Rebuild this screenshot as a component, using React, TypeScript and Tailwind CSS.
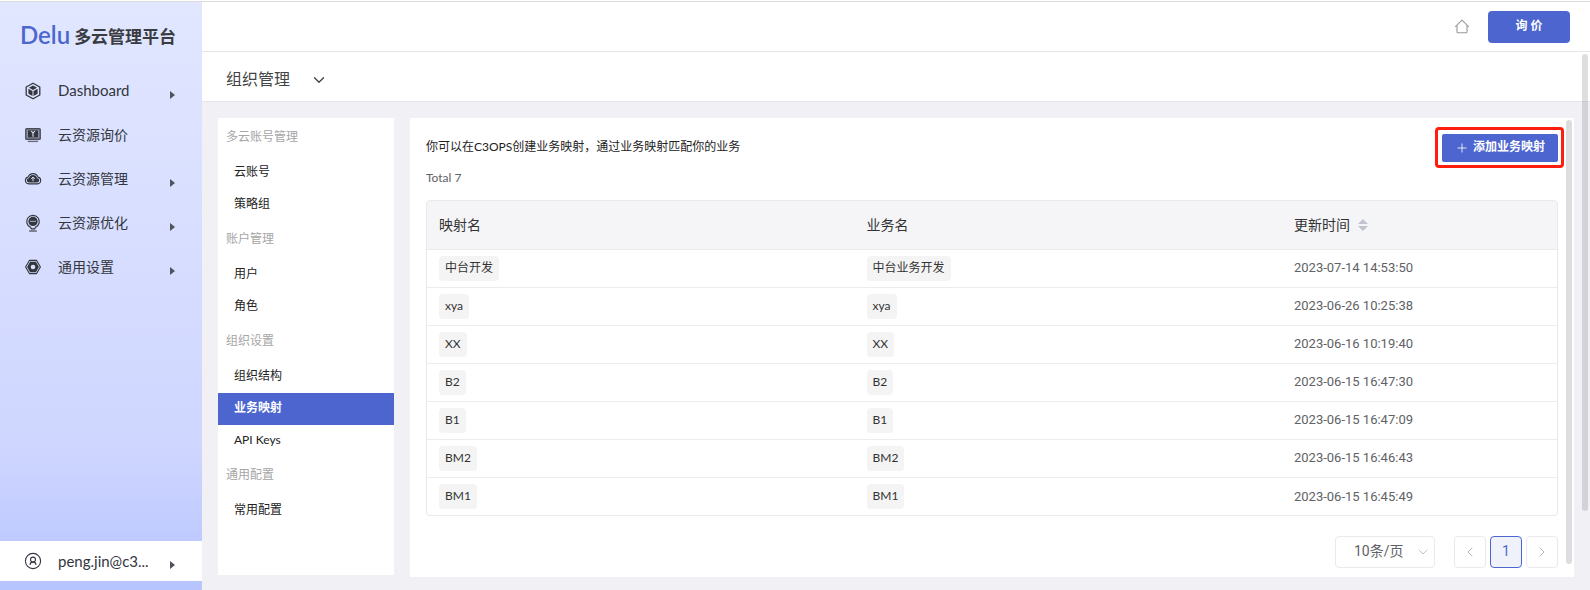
import React, { useState } from "react";
import { clsx } from "clsx";
import { ChevronDown, ChevronLeft, ChevronRight, Plus } from "lucide-react";

type NavItem = {
  label: string;
  icon: React.ReactNode;
  expandable: boolean;
};

type MenuGroup = {
  title: string;
  items: string[];
};

type Mapping = {
  name: string;
  business: string;
  updatedAt: string;
};

const CubeIcon = () => (
  <svg width="18" height="18" viewBox="0 0 18 18" fill="none" aria-hidden="true">
    <path d="M9 1.2 15.8 5v8L9 16.8 2.2 13V5L9 1.2Z" stroke="#33363d" strokeWidth="1.3" strokeLinejoin="round" />
    <path d="M9 3.6 13 5.8 9 8 5 5.8 9 3.6Z" fill="#33363d" />
    <path d="M4.4 6.8 8.5 9v5L4.4 11.8v-5ZM13.6 6.8 9.5 9v5l4.1-2.2v-5Z" fill="#33363d" />
  </svg>
);

const MonitorIcon = () => (
  <svg width="18" height="18" viewBox="0 0 18 18" fill="none" aria-hidden="true">
    <rect x="1.8" y="2.8" width="14.4" height="10.4" rx="0.8" fill="#8d92a6" stroke="#4a4d57" strokeWidth="1.4" />
    <rect x="4" y="4.4" width="10" height="7" fill="#33363d" />
    <path d="M7.2 5 9 7.2 10.8 5M9 7.2v3.6" stroke="#dfe5ff" strokeWidth="1.1" />
    <path d="M3.8 15.4h10.4" stroke="#6a6d79" strokeWidth="1.4" />
  </svg>
);

const CloudIcon = () => (
  <svg width="20" height="18" viewBox="0 0 20 18" fill="none" aria-hidden="true">
    <path
      d="M5.2 14.4h9.8a3.8 3.8 0 0 0 .6-7.5 5.9 5.9 0 0 0-11.1 0 3.8 3.8 0 0 0 .7 7.5Z"
      stroke="#33363d"
      strokeWidth="1.2"
    />
    <path d="M5.4 12.8h9.2a2.3 2.3 0 0 0 0-4.6 4.7 4.7 0 0 0-9.2 0 2.3 2.3 0 0 0 0 4.6Z" fill="#33363d" />
    <path d="M10 11.4V7M8 8.8l2-2 2 2" stroke="#dbe1ff" strokeWidth="1.1" />
  </svg>
);

const BulbIcon = () => (
  <svg width="18" height="18" viewBox="0 0 18 18" fill="none" aria-hidden="true">
    <path d="M6.6 13.4a6.3 6.3 0 1 1 4.8 0l-.8 1.4H7.4l-.8-1.4Z" stroke="#33363d" strokeWidth="1.2" />
    <circle cx="9" cy="7.4" r="4.6" fill="#33363d" />
    <path d="M6.4 7.4h1.2M8.4 7.4h1.2M10.4 7.4h1.2" stroke="#dbe1ff" strokeWidth="1.2" />
    <path d="M5.2 17h7.6" stroke="#4a4d57" strokeWidth="1.3" />
  </svg>
);

const NutIcon = () => (
  <svg width="18" height="18" viewBox="0 0 18 18" fill="none" aria-hidden="true">
    <path d="M5.4 2.4h7.2L16.4 9l-3.8 6.6H5.4L1.6 9l3.8-6.6Z" stroke="#33363d" strokeWidth="1.1" strokeLinejoin="round" />
    <path d="M6.1 3.8h5.8L14.9 9l-3 5.2H6.1L3.1 9l3-5.2Z" fill="#33363d" />
    <circle cx="9" cy="9" r="2.3" fill="#d8dfff" />
  </svg>
);

const UserIcon = () => (
  <svg width="18" height="18" viewBox="0 0 18 18" fill="none" stroke="#33363d" aria-hidden="true">
    <circle cx="9" cy="9" r="7.6" strokeWidth="1.1" />
    <circle cx="9" cy="7.6" r="2.5" strokeWidth="1.1" />
    <path d="M6 12.9c.1-1.9 1.3-2.8 3-2.8s2.9.9 3 2.8" strokeWidth="1.1" />
  </svg>
);

const HomeIcon = () => (
  <svg width="16" height="16" viewBox="0 0 16 16" fill="none" stroke="#999" strokeWidth="1.1" aria-hidden="true">
    <path d="M1.2 7.8 8 1.2l6.8 6.6" strokeLinejoin="round" />
    <path d="M3 6.4v6.4c0 .6.4 1 1 1h8c.6 0 1-.4 1-1V6.4" strokeLinejoin="round" />
  </svg>
);

const CaretRight = () => (
  <svg width="5" height="8" viewBox="0 0 5 8" className="mt-2 shrink-0" aria-hidden="true">
    <path d="M0 0 5 4 0 8Z" fill="#50535c" />
  </svg>
);

const SortIcon = () => (
  <svg width="10" height="12" viewBox="0 0 10 12" fill="#c0c4cc" aria-hidden="true">
    <path d="M5 0 10 5H0ZM5 12 0 7h10Z" />
  </svg>
);

const navItems: NavItem[] = [
  { label: "Dashboard", icon: <CubeIcon />, expandable: true },
  { label: "云资源询价", icon: <MonitorIcon />, expandable: false },
  { label: "云资源管理", icon: <CloudIcon />, expandable: true },
  { label: "云资源优化", icon: <BulbIcon />, expandable: true },
  { label: "通用设置", icon: <NutIcon />, expandable: true },
];

const menuGroups: MenuGroup[] = [
  { title: "多云账号管理", items: ["云账号", "策略组"] },
  { title: "账户管理", items: ["用户", "角色"] },
  { title: "组织设置", items: ["组织结构", "业务映射", "API Keys"] },
  { title: "通用配置", items: ["常用配置"] },
];

const mappings: Mapping[] = [
  { name: "中台开发", business: "中台业务开发", updatedAt: "2023-07-14 14:53:50" },
  { name: "xya", business: "xya", updatedAt: "2023-06-26 10:25:38" },
  { name: "XX", business: "XX", updatedAt: "2023-06-16 10:19:40" },
  { name: "B2", business: "B2", updatedAt: "2023-06-15 16:47:30" },
  { name: "B1", business: "B1", updatedAt: "2023-06-15 16:47:09" },
  { name: "BM2", business: "BM2", updatedAt: "2023-06-15 16:46:43" },
  { name: "BM1", business: "BM1", updatedAt: "2023-06-15 16:45:49" },
];

const Sidebar = () => (
  <aside className="flex w-[202px] shrink-0 flex-col bg-linear-to-b from-[#e1e7ff] via-[#cfd6ff] via-75% to-[#b7c5ff] pb-[9px]">
    <h1 className="flex h-[67px] items-center gap-1 pl-5 pt-[3px] text-[#3a3c42]">
      <span className="pb-1 text-2xl font-semibold text-[#4d66cf]">Delu</span>
      <span className="text-[17px] font-bold">多云管理平台</span>
    </h1>
    <nav className="flex-1">
      {navItems.map((item) => (
        <a key={item.label} href="#" className="flex h-11 items-center pl-6 pr-[27px] text-sm text-[#33363d]">
          <span className="flex w-[34px] shrink-0 items-center">
            <span className="flex w-[18px] justify-center">{item.icon}</span>
          </span>
          <span className={clsx("flex-1", item.label === "Dashboard" && "text-[15px]")}>{item.label}</span>
          {item.expandable && <CaretRight />}
        </a>
      ))}
    </nav>
    <button className="flex h-10 items-center bg-white pl-6 pr-[27px] text-left text-[15px] text-[#33363d]">
      <span className="w-[34px] shrink-0">
        <UserIcon />
      </span>
      <span className="flex-1 pt-px">peng.jin@c3...</span>
      <CaretRight />
    </button>
  </aside>
);

const SubMenu = () => {
  const [active, setActive] = useState("业务映射");

  return (
    <nav className="mb-[15px] w-44 shrink-0 bg-white pt-px text-xs">
      {menuGroups.map((group) => (
        <section key={group.title}>
          <h3 className="flex h-[38px] items-center px-2 pb-0.5 text-[#a6a6a6]">{group.title}</h3>
          {group.items.map((item) => (
            <a
              key={item}
              href="#"
              onClick={() => setActive(item)}
              className={clsx(
                "flex h-8 items-center px-4 pb-0.5",
                item === active ? "bg-[#4d66cf] font-bold text-white" : "text-[#222]"
              )}
            >
              {item}
            </a>
          ))}
        </section>
      ))}
    </nav>
  );
};

const Tag = ({ children }: { children: React.ReactNode }) => (
  <span className="inline-flex h-[25px] items-center rounded-sm bg-[#f4f4f4] px-1.5 align-middle text-[#333]">
    {children}
  </span>
);

const MappingTable = () => (
  <div className="overflow-hidden rounded border border-[#e8e8ee]">
    <table className="w-full table-fixed text-left">
      <thead className="bg-[#f5f5f8] text-sm text-[#333]">
        <tr className="h-12">
          <th className="border-b border-[#ebebf0] px-3 font-normal">映射名</th>
          <th className="border-b border-[#ebebf0] px-3 font-normal">业务名</th>
          <th className="w-[275px] border-b border-[#ebebf0] px-3 font-normal">
            <button className="flex items-center gap-2">
              更新时间
              <SortIcon />
            </button>
          </th>
        </tr>
      </thead>
      <tbody className="divide-y divide-[#ebebf0] text-xs">
        {mappings.map((row) => (
          <tr key={row.name} className="h-[38px]">
            <td className="px-3">
              <Tag>{row.name}</Tag>
            </td>
            <td className="px-3">
              <Tag>{row.business}</Tag>
            </td>
            <td className="px-3 font-[Roboto] text-[13px] text-[#606266]">{row.updatedAt}</td>
          </tr>
        ))}
      </tbody>
    </table>
  </div>
);

const Pagination = () => (
  <div className="mt-5 flex justify-end">
    <div className="relative mr-[19px] font-['Roboto','Noto_Sans_CJK_SC',sans-serif] text-sm">
      <select
        aria-label="每页条数"
        className="h-8 w-[100px] appearance-none rounded border border-[#e8eaee] bg-white pb-0.5 pl-[18px] text-[#606266]"
      >
        <option>10条/页</option>
        <option>20条/页</option>
        <option>50条/页</option>
      </select>
      <ChevronDown className="pointer-events-none absolute right-1 top-2 size-4 text-[#c0c4cc]" strokeWidth={1.5} />
    </div>
    <div className="flex gap-1 font-[Roboto] text-sm">
      <button
        aria-label="上一页"
        className="flex size-8 items-center justify-center rounded border border-[#e8eaee] text-[#b4b8c0]"
      >
        <ChevronLeft className="size-4" strokeWidth={1.5} />
      </button>
      <button className="flex size-8 items-center justify-center rounded border border-[#4d66cf] bg-[#eff2fb] pb-0.5 text-[#4d66cf]">
        1
      </button>
      <button
        aria-label="下一页"
        className="flex size-8 items-center justify-center rounded border border-[#e8eaee] text-[#b4b8c0]"
      >
        <ChevronRight className="size-4" strokeWidth={1.5} />
      </button>
    </div>
  </div>
);

const App = () => {
  return (
    <div className="flex h-screen flex-col pt-px font-['Lato','Noto_Sans_CJK_SC',sans-serif]">
      <div className="flex min-h-0 flex-1 border-t border-[#dcdcdc]">
        <Sidebar />
        <div className="flex min-w-0 flex-1 flex-col">
          <header className="flex h-[50px] shrink-0 items-center justify-end gap-[18px] border-b border-[#e6e6e6] bg-white pr-5">
            <a href="#" aria-label="首页">
              <HomeIcon />
            </a>
            <button className="h-8 w-[82px] rounded bg-[#4d66cf] pb-0.5 text-xs font-bold text-white">询 价</button>
          </header>

          <div className="relative flex min-h-0 flex-1 flex-col">
            <div className="flex h-[50px] shrink-0 items-center border-b border-[#e6e6ea] bg-white pl-6 pt-1 text-[#444]">
              <button className="flex items-center gap-5 text-base">
                组织管理
                <ChevronDown className="mt-0.5 size-[18px]" strokeWidth={1.8} />
              </button>
            </div>

            <div className="flex min-h-0 flex-1 gap-4 bg-[#f0f0f5] px-4 pt-4">
              <SubMenu />
              <main className="relative mb-[13px] min-w-0 flex-1 bg-white px-4 pt-4">
                <div className="flex items-start justify-between">
                  <p className="pt-[5px] text-xs text-[#222]">你可以在C3OPS创建业务映射，通过业务映射匹配你的业务</p>
                  <div className="relative">
                    <button className="flex h-7 w-[116px] items-center justify-center gap-1 rounded-xs bg-[#4d66cf] pb-0.5 text-xs font-bold text-white">
                      <Plus className="mt-0.5 size-3.5" strokeWidth={1.4} />
                      添加业务映射
                    </button>
                    <span className="pointer-events-none absolute -bottom-1.5 -left-[7px] -right-1.5 -top-[7px] rounded border-[3px] border-[#ff1d0d]" />
                  </div>
                </div>
                <p className="mb-3.5 mt-2 text-xs text-[#606266]">Total 7</p>
                <MappingTable />
                <Pagination />
                <div className="absolute bottom-[13px] right-0.5 top-0.5 w-1.5 rounded-full bg-[#dcdddf]" />
              </main>
            </div>
            <div className="absolute right-0.5 top-0.5 h-[85%] w-1.5 rounded-full bg-[#909399]/30" />
          </div>
        </div>
      </div>
    </div>
  );
};

export default App;
